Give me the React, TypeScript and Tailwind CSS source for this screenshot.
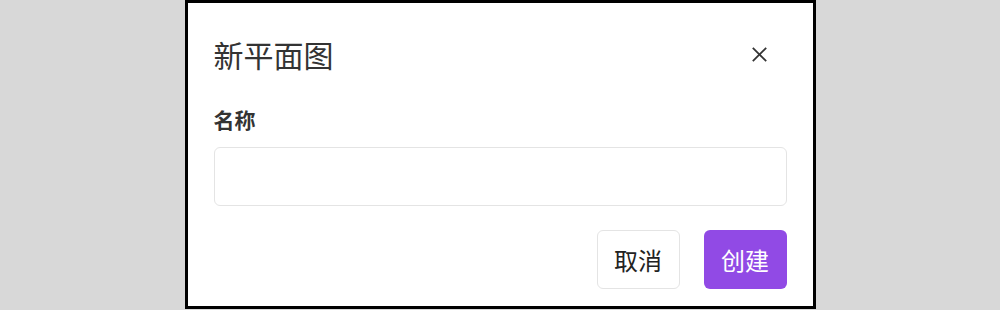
import { useState } from 'react'

export default function App() {
  const [name, setName] = useState('')

  return (
    <div className="w-full h-[310px] bg-[#d8d8d8] flex justify-center font-['Noto_Sans_CJK_SC','Noto_Sans',sans-serif]">
      <div className="w-[631px] h-[309px] bg-white border-[3px] border-black flex flex-col px-[26px] pt-[33px] pb-[17px]">

        {/* Header */}
        <div className="flex justify-between items-center">
          <h2 className="text-[30px] leading-[36px] text-[#333] font-normal">新平面图</h2>
          <button className="w-[55px] h-[36px] flex items-center justify-center text-[#333]">
            <svg viewBox="0 0 15 15" className="w-[15px] h-[15px]" fill="none" stroke="currentColor" strokeWidth={1.8}>
              <line x1="0.8" y1="0.8" x2="14.2" y2="14.2" />
              <line x1="14.2" y1="0.8" x2="0.8" y2="14.2" />
            </svg>
          </button>
        </div>

        {/* Field */}
        <label className="mt-[33px] text-[21px] leading-[28px] font-bold text-[#333]">名称</label>
        <input
          value={name}
          onChange={(e) => setName(e.target.value)}
          className="mt-[14px] h-[59px] w-full border border-[#e4e4e4] rounded-md px-3 text-[20px] outline-none"
        />

        {/* Actions */}
        <div className="mt-[24px] flex justify-end gap-[24px]">
          <button className="w-[83px] h-[59px] border border-[#e4e4e4] rounded-md text-[24px] text-[#222] bg-white">
            取消
          </button>
          <button className="w-[83px] h-[59px] rounded-md text-[24px] text-white bg-[#914ae5]">
            创建
          </button>
        </div>
      </div>
    </div>
  )
}
